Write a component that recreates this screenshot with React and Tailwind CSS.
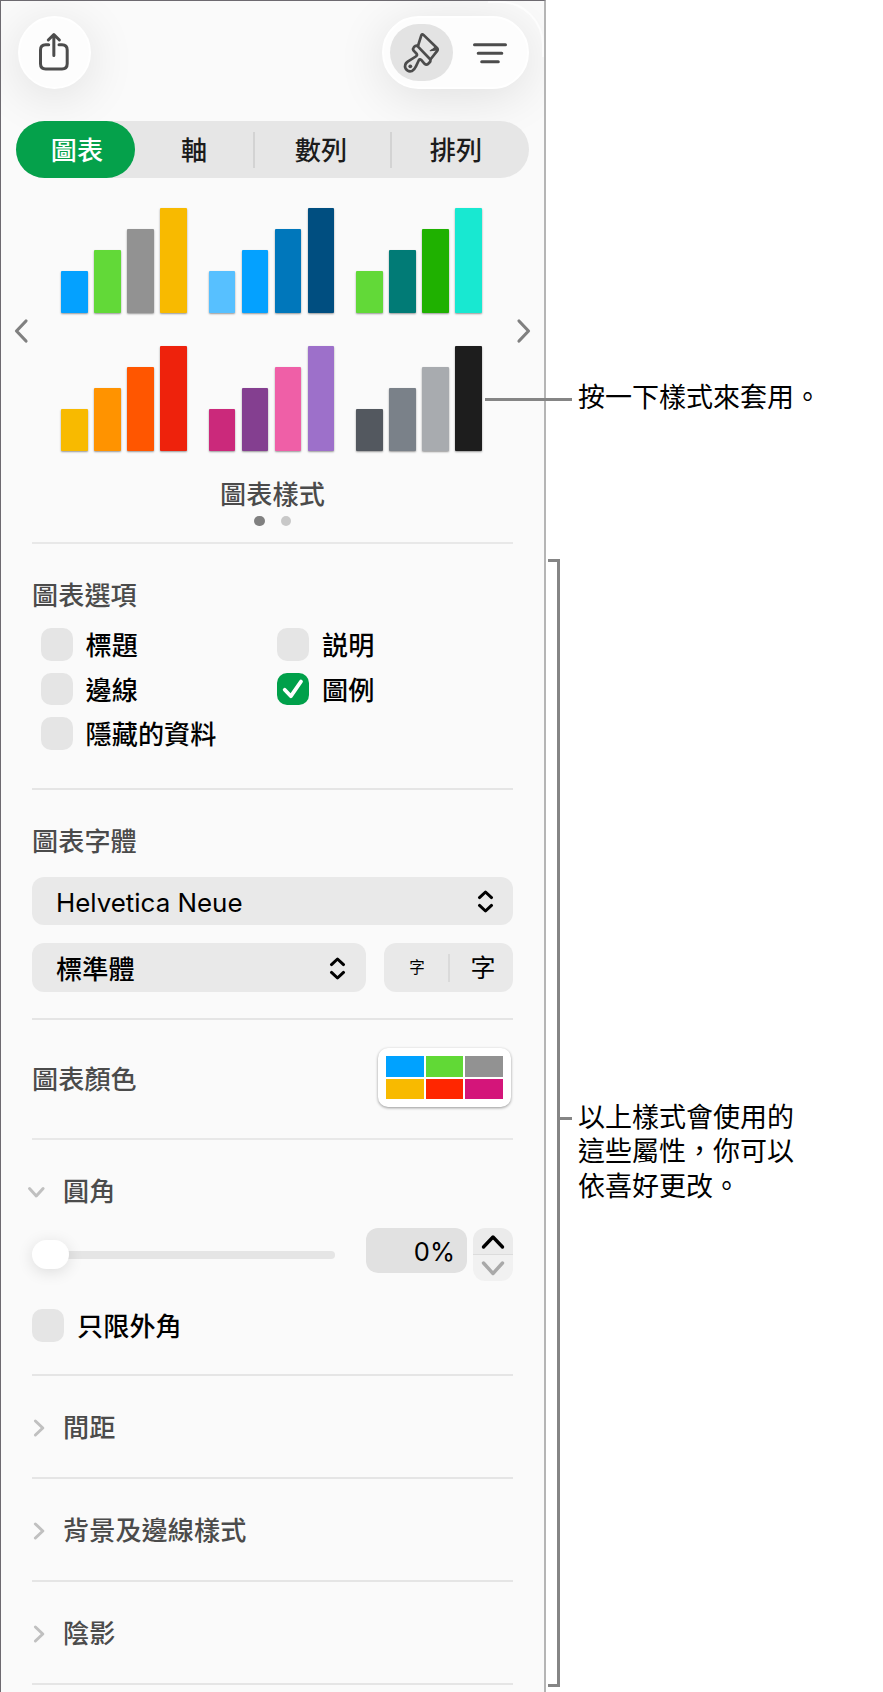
import React from "react";

const CHART_STYLES = [
  ["#04a1ff", "#62d938", "#929292", "#f8ba00"],
  ["#57c0ff", "#04a1ff", "#0077bb", "#004e80"],
  ["#62d938", "#017b76", "#1fb100", "#18e8d1"],
  ["#f8ba00", "#ff9300", "#ff5600", "#ee220c"],
  ["#cb297b", "#843f90", "#ef5fa7", "#9d70ca"],
  ["#53585f", "#7a8189", "#a8abaf", "#1d1d1d"],
];
const BAR_HEIGHTS = ["h-[42px]", "h-[63px]", "h-[84px]", "h-[105px]"];
const PALETTE = ["#00a2ff", "#61d936", "#929292", "#f8ba00", "#ff2600", "#d4157a"];

function MiniChart({ colors }) {
  return (
    <div className="flex h-[106px] items-end justify-between">
      {colors.map((c, i) => (
        <div
          key={i}
          className={`w-[26.5px] rounded-[1px] shadow-[0_1px_2px_rgba(0,0,0,0.4)] ${BAR_HEIGHTS[i]}`}
          style={{ backgroundColor: c }}
        />
      ))}
    </div>
  );
}

function Chevron({ d, w, h, color, width }) {
  return (
    <svg width={w} height={h} viewBox={`0 0 ${w} ${h}`} fill="none" stroke={color} strokeWidth={width} strokeLinecap="round" strokeLinejoin="round">
      <path d={d} />
    </svg>
  );
}

function UpDown() {
  return <Chevron w={17} h={24} color="#000" width={3} d="M2.5 8.6 8.5 3 14.5 8.6M2.5 16.4 8.5 22 14.5 16.4" />;
}

function Check({ label, checked = false }) {
  return (
    <label className="flex h-[44.5px] items-center gap-[13px]">
      <span className={`flex h-[32.5px] w-8 items-center justify-center rounded-[10px] ${checked ? "bg-[#00a04a]" : "bg-[#e5e5e5]"}`}>
        {checked && <Chevron w={24} h={24} color="#fff" width={3.8} d="M3.7 12.8 9.9 19.2 20 4.5" />}
      </span>
      <span className="font-medium text-black">{label}</span>
    </label>
  );
}

function Disclosure({ title }) {
  return (
    <section className="mx-[31px] flex h-[103px] items-center border-b-2 border-[#e5e5e5]">
      <span className="flex w-[31px] pl-px pt-0.5">
        <Chevron w={13} h={20} color="#c0c0c0" width={3} d="M2.4 3 9.8 10 2.4 17" />
      </span>
      <h2 className="relative -top-px font-medium">{title}</h2>
    </section>
  );
}

function Toolbar() {
  return (
    <header className="flex h-[120px] items-start justify-between pl-[17px] pr-[15px] pt-[15px]">
      <button className="flex size-[73px] items-center justify-center rounded-full border-2 border-white bg-[#fdfdfd] pr-px shadow-[0_8px_50px_rgba(0,0,0,0.11)]">
        <svg width="36" height="44" viewBox="0 0 36 44" fill="none" stroke="#4c4c4c" strokeWidth="3" strokeLinecap="round" strokeLinejoin="round">
          <path d="M12.7 13.8H9.7Q4.5 13.8 4.5 19V32.7Q4.5 37.9 9.7 37.9H26Q31.2 37.9 31.2 32.7V19Q31.2 13.8 26 13.8H23" />
          <path d="M17.85 24.5V4M12.3 9 17.85 3.5 23.4 9" />
        </svg>
      </button>
      <div className="flex h-[73px] w-[147px] items-center rounded-full border-2 border-white bg-[#fdfdfd] pl-[6px] shadow-[0_8px_50px_rgba(0,0,0,0.11)]">
        <button className="flex h-[57px] w-[63px] items-center justify-center rounded-full bg-[#e3e3e3]">
          <svg width="40" height="44" viewBox="0 0 40 44" fill="none" stroke="#4c4c4c" strokeWidth="2.7" strokeLinecap="round" strokeLinejoin="round">
            <path d="M16 14.8 19.3 4.3Q20.1 2.7 21.5 3.9L35 17Q36.3 18.5 35.2 19.9L28.4 28.5" />
            <path d="M16 14.8Q13.7 14 12.1 15.9T11.4 19.4L14.6 22.7Q15.6 24.3 13.8 25.5L5.7 30.7Q1.8 33.6 3.6 37.5 6 41.3 10 40 12.4 38.9 13.7 35.8L16.7 29.5Q17.7 27.6 19.2 28.9L22.6 32.8Q24.3 34.4 26.2 32.9L27.3 31.7Q28.8 30.2 28.4 28.5L15.3 14.9" />
            <path d="M33.4 15.8Q31.5 18 28.3 19.7L35 19Z" fill="#4c4c4c" strokeWidth="1.2" />
            <circle cx="8.3" cy="35.3" r="1.9" fill="#4c4c4c" stroke="none" />
          </svg>
        </button>
        <button className="flex flex-1 items-center justify-center">
          <svg width="36" height="24" viewBox="0 0 36 24" fill="none" stroke="#4c4c4c" strokeWidth="3" strokeLinecap="round">
            <path d="M2.5 3.8H33.5M6.2 12.2H29.8M9.7 20.8H26.3" />
          </svg>
        </button>
      </div>
    </header>
  );
}

function Tabs() {
  return (
    <nav className="ml-[15px] flex h-[57px] w-[513px] items-center rounded-full bg-[#e6e6e6] font-medium text-[#1c1c1c]">
      <button className="flex h-full w-[119px] items-center justify-center rounded-full bg-[#05a14b] pb-px pl-[3px] text-white">圖表</button>
      <button className="w-[118px] pb-px text-center">軸</button>
      <span className="h-9 w-0.5 bg-[#d3d3d3]" />
      <button className="w-[135px] pb-px pr-[3px] text-center">數列</button>
      <span className="h-9 w-0.5 bg-[#d3d3d3]" />
      <button className="w-[128px] pb-px text-center">排列</button>
    </nav>
  );
}

function Inspector() {
  return (
    <aside className="relative flex h-[1692px] w-[546px] shrink-0 flex-col overflow-hidden border-l border-r-2 border-t border-l-[#6d6a70] border-r-[#b5b5b5] border-t-[#6d6a70] bg-[#fafafa] tracking-[0.1px] text-[#4b4b4b]">
      <Toolbar />
      <Tabs />
      <section className="mx-[31px] flex h-[366px] flex-col border-b-2 border-[#e8e8e8] pt-[29px]">
        <div className="-mx-[20px] flex items-center justify-between">
          <span className="pt-1">
            <Chevron w={18} h={26} color="#808080" width={3.2} d="M14 3 4.5 13 14 23" />
          </span>
          <div className="mr-[2px] grid grid-cols-[repeat(3,125.5px)] gap-x-[22px] gap-y-[32px]">
            {CHART_STYLES.map((colors, i) => (
              <MiniChart key={i} colors={colors} />
            ))}
          </div>
          <span className="pt-1">
            <Chevron w={18} h={26} color="#808080" width={3.2} d="M4 3 13.5 13 4 23" />
          </span>
        </div>
        <p className="mt-[22.5px] text-center font-medium leading-[38px]">圖表樣式</p>
        <div className="mt-1 flex justify-center gap-4">
          <span className="size-[10.5px] rounded-full bg-[#808080]" />
          <span className="size-[10.5px] rounded-full bg-[#c8c8c8]" />
        </div>
      </section>

      <section className="mx-[31px] h-[246px] border-b-2 border-[#e5e5e5] pt-[31px]">
        <h2 className="font-medium leading-[38px]">圖表選項</h2>
        <div className="ml-[8.5px] mt-[9px] grid grid-cols-[236.5px_1fr]">
          <Check label="標題" />
          <Check label="説明" />
          <Check label="邊線" />
          <Check label="圖例" checked />
          <Check label="隱藏的資料" />
        </div>
      </section>

      <section className="mx-[31px] h-[230px] border-b-2 border-[#e5e5e5] pt-[31px]">
        <h2 className="font-medium leading-[38px]">圖表字體</h2>
        <div className="mt-[18px] flex h-[48px] items-center justify-between rounded-xl bg-[#e9e9e9] pl-6 pr-[19px] text-black">
          <span className="pt-[3px] font-['Inter'] text-[25.9px] tracking-normal">Helvetica Neue</span>
          <UpDown />
        </div>
        <div className="mt-[18px] flex gap-[18px] text-black">
          <div className="flex h-[49px] w-[334px] items-center justify-between rounded-xl bg-[#e9e9e9] pl-6 pr-[20px]">
            <span className="font-medium">標準體</span>
            <UpDown />
          </div>
          <div className="flex h-[49px] flex-1 items-center rounded-xl bg-[#e9e9e9]">
            <span className="w-[64px] pb-1 pl-0.5 text-center text-[15.5px]">字</span>
            <span className="h-7 w-0.5 bg-[#dadada]" />
            <span className="relative -top-[1.5px] flex-1 pl-[3px] text-center text-[25px]">字</span>
          </div>
        </div>
      </section>

      <section className="mx-[31px] flex h-[119.5px] items-center justify-between border-b-2 border-[#e8e8e8]">
        <h2 className="relative -top-px font-medium">圖表顏色</h2>
        <div className="relative -top-px mr-[2px] grid h-[59px] w-[133px] grid-cols-3 gap-0.5 rounded-[10px] bg-white p-2 shadow-[0_1px_3px_rgba(0,0,0,0.4)]">
          {PALETTE.map((c) => (
            <span key={c} style={{ backgroundColor: c }} />
          ))}
        </div>
      </section>

      <section className="mx-[31px] h-[236.5px] border-b-2 border-[#e5e5e5] pt-[31px]">
        <div className="-ml-[6px] flex h-[38px] items-center">
          <span className="flex w-[37px] pt-[5px]">
            <Chevron w={20} h={14} color="#c0c0c0" width={3} d="M3.5 3.5 10.3 11 17.1 3.5" />
          </span>
          <h2 className="font-medium">圓角</h2>
        </div>
        <div className="mt-[19.5px] flex h-[53px] items-start">
          <div className="mt-3 flex h-[29px] w-[303px] items-center">
            <span className="z-10 h-[29px] w-[37px] rounded-full bg-white shadow-[0_3px_16px_rgba(0,0,0,0.12)]" />
            <span className="-ml-2 h-2 flex-1 rounded-full bg-[#e5e5e5]" />
          </div>
          <div className="ml-[31px] flex h-[45px] w-[101px] items-center justify-end rounded-xl bg-[#e1e1e1] pr-3 pt-0.5 font-['Inter'] text-[25.5px] tracking-normal text-black">0%</div>
          <div className="ml-[6px] flex h-[53px] w-10 flex-col overflow-hidden rounded-xl">
            <span className="flex h-[27px] items-center justify-center border-b border-[#dcdcdc] bg-[#ebebeb]">
              <Chevron w={26} h={18} color="#000" width={3.4} d="M3.5 15 13 5 22.5 15" />
            </span>
            <span className="flex h-[26px] items-center justify-center bg-[#f1f1f1]">
              <Chevron w={26} h={18} color="#a9a9a9" width={3.4} d="M3.5 4 13 14.5 22.5 4" />
            </span>
          </div>
        </div>
        <div className="mt-[22px]">
          <Check label="只限外角" />
        </div>
      </section>

      <Disclosure title="間距" />
      <Disclosure title="背景及邊線樣式" />
      <Disclosure title="陰影" />
      <span className="pointer-events-none absolute right-0 top-0 size-14 rounded-tr-[44px] border-r-2 border-t-2 border-white/70" />
    </aside>
  );
}

function Notes() {
  return (
    <div className="flex flex-1">
      <div className="ml-0.5 mt-[559px] h-[1128px] w-3 border-[3px] border-l-0 border-[#858585]" />
      <div className="flex flex-col pl-[18px] text-[27px] leading-[34.5px] text-black">
        <p className="mt-[379px]">按一下樣式來套用。</p>
        <p className="mt-[685px]">
          以上樣式會使用的
          <br />
          這些屬性，你可以
          <br />
          依喜好更改。
        </p>
      </div>
    </div>
  );
}

export default function App() {
  return (
    <main lang="zh-Hant" className="relative flex h-[1692px] w-[883px] overflow-hidden bg-white font-['Noto_Sans_CJK_TC',sans-serif] text-[26.1px] leading-[38px]">
      <Inspector />
      <Notes />
      <span className="absolute left-[485px] top-[398px] h-[3px] w-[87px] bg-[#858585]" />
      <span className="absolute left-[560px] top-[1117px] h-[3px] w-3 bg-[#858585]" />
    </main>
  );
}
